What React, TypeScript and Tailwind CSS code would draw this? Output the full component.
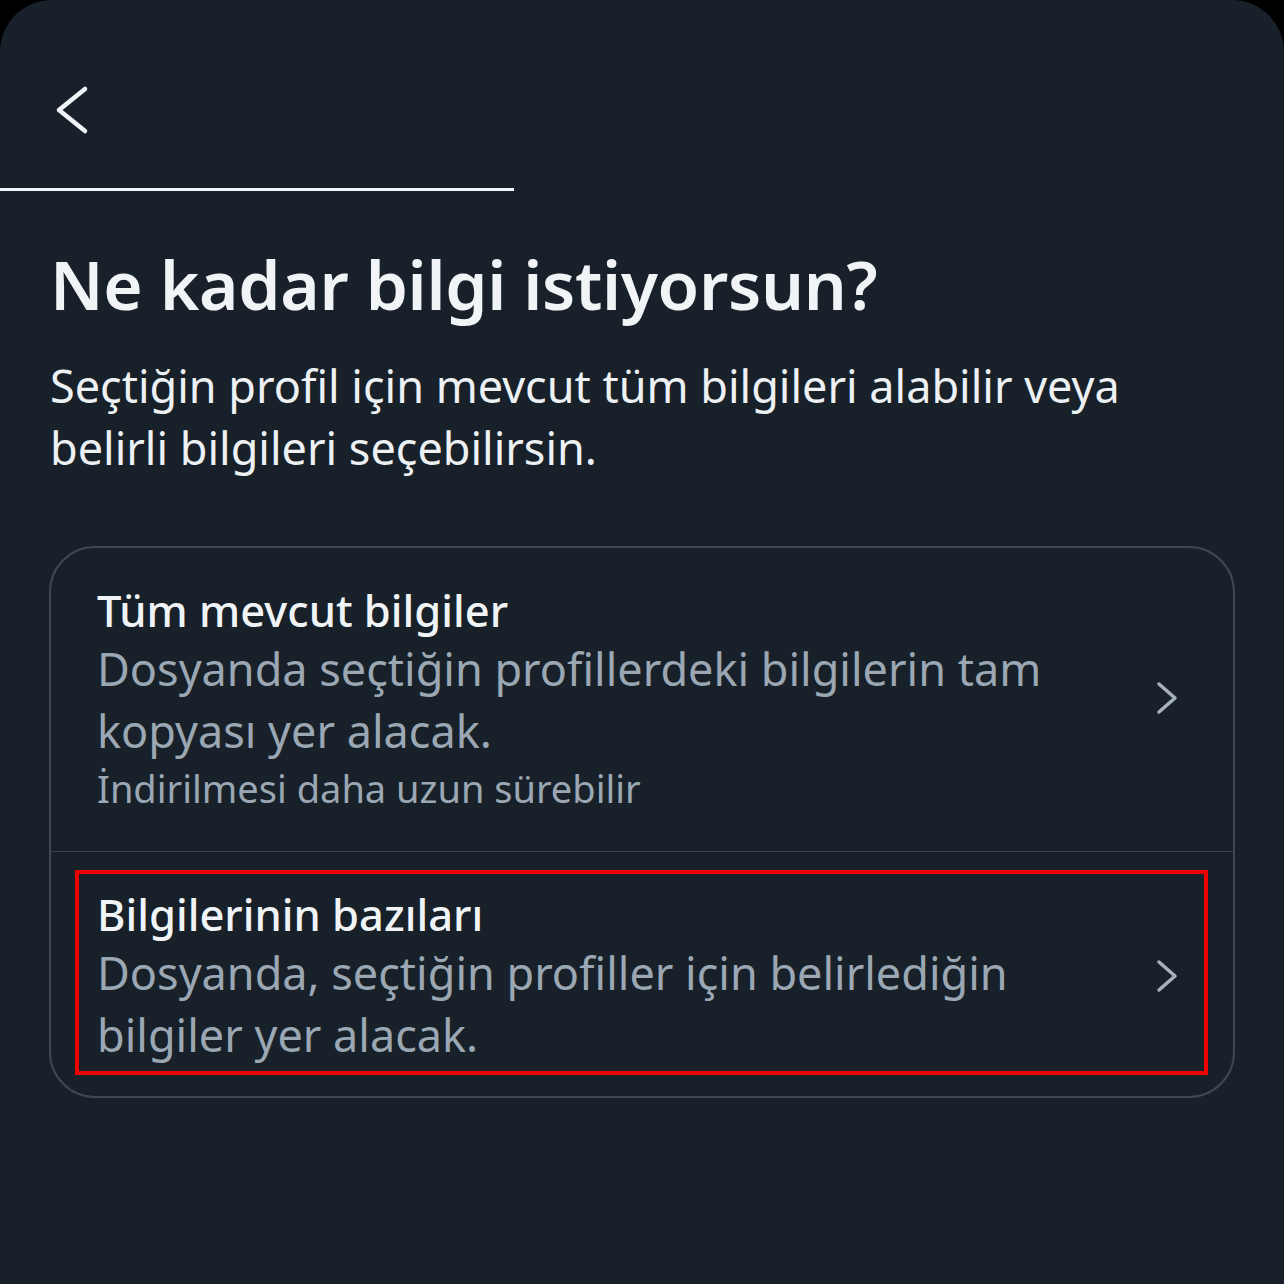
const options = [
  {
    id: 1,
    title: "Tüm mevcut bilgiler",
    lines: ["Dosyanda seçtiğin profillerdeki bilgilerin tam", "kopyası yer alacak."],
    note: "İndirilmesi daha uzun sürebilir",
    marked: false,
  },
  {
    id: 2,
    title: "Bilgilerinin bazıları",
    lines: ["Dosyanda, seçtiğin profiller için belirlediğin", "bilgiler yer alacak."],
    note: "",
    marked: true,
  },
];

export default function App() {
  return (
    <div className="w-[1284px] h-[1284px] bg-black overflow-hidden font-['Noto_Sans',sans-serif]">
      <div className="h-full bg-[#18212a] rounded-t-[52px] flex flex-col">
        {/* Header */}
        <div className="h-[188px] flex items-start pt-[84px] pl-[54px]">
          <svg width="40" height="52" viewBox="0 0 40 52" fill="none">
            <polyline
              points="31,5 5,26 31,47"
              stroke="#f1f4f7"
              strokeWidth="4.5"
              strokeLinecap="round"
              strokeLinejoin="round"
            />
          </svg>
        </div>
        <div className="w-[514px] h-[3px] bg-[#f1f4f7]" />

        {/* Intro */}
        <div className="px-[50px] pt-[52px]">
          <h1 className="text-[67.5px] leading-[82px] font-semibold text-[#f1f4f7] tracking-[-0.3px]">
            Ne kadar bilgi istiyorsun?
          </h1>
          <p className="mt-[30px] text-[45px] leading-[62px] text-[#eef1f4]">
            Seçtiğin profil için mevcut tüm bilgileri alabilir veya
            <br />
            belirli bilgileri seçebilirsin.
          </p>
        </div>

        {/* Options card */}
        <div className="mx-[49px] mt-[67px] border-[2.5px] border-[#3d4853] rounded-[46px]">
          {options.map((opt, index) => (
            <div
              key={opt.id}
              className={`relative flex items-center pl-[46px] pr-[54px] ${
                index > 0 ? "border-t-[1.5px] border-[#36414c] pt-[34px] pb-[30px]" : "pt-[34px] pb-[37px]"
              }`}
            >
              <div className="flex-1">
                <p className="text-[43.5px] leading-[56px] font-medium text-[#f1f4f7]">{opt.title}</p>
                <p className="text-[45px] leading-[62px] text-[#9ba7b3]">
                  {opt.lines[0]}
                  <br />
                  {opt.lines[1]}
                </p>
                {opt.note && (
                  <p className="text-[38px] leading-[52px] text-[#9ba7b3]">{opt.note}</p>
                )}
              </div>
              <svg width="24" height="36" viewBox="0 0 24 36" fill="none">
                <polyline
                  points="4,4 20,18 4,32"
                  stroke="#a6b1bc"
                  strokeWidth="3.5"
                  strokeLinecap="round"
                  strokeLinejoin="round"
                />
              </svg>
              {opt.marked && (
                <div className="absolute left-[24px] right-[25px] top-[18px] bottom-[21px] border-[4px] border-[#ee0000]" />
              )}
            </div>
          ))}
        </div>
      </div>
    </div>
  );
}
